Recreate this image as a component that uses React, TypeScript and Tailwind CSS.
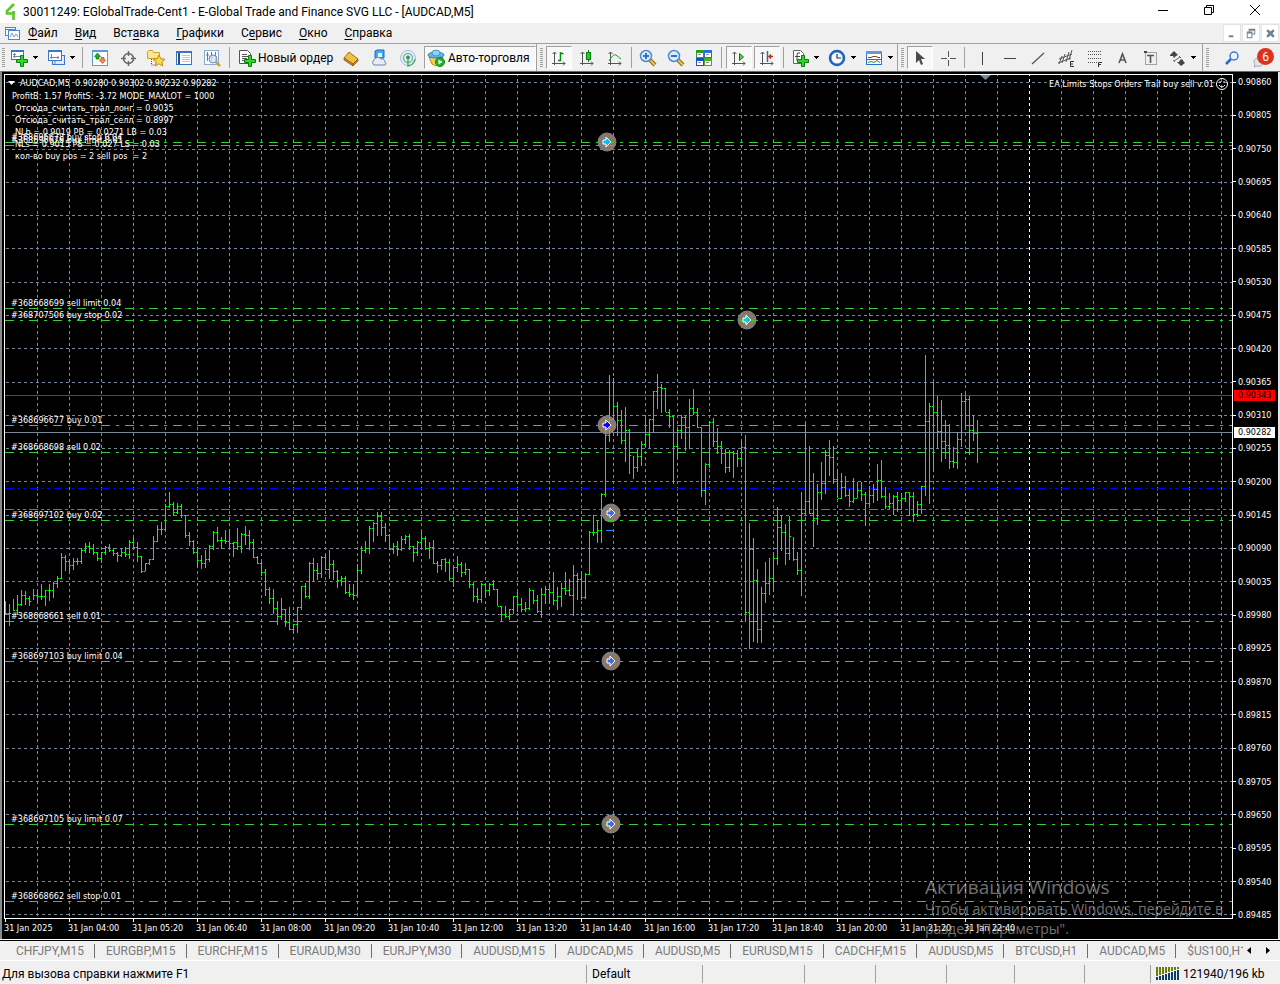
import React from 'react';

const PRICE_TOP = 82;
const PRICE_STEP = 33.28;
const BAR_STEP = 4;
const FIRST_BAR_X = 5;

const prices = Array.from({ length: 26 }, (_, i) => (0.9086 - i * 0.00055).toFixed(5));
const gridColumns = Array.from({ length: 38 }, (_, i) => 37 + i * 32);

const times = [
  '2025', '04:00', '05:20', '06:40', '08:00', '09:20', '10:40', '12:00',
  '13:20', '14:40', '16:00', '17:20', '18:40', '20:00', '21:20', '22:40',
];

// Each block holds high/low/close triples, in thirds of a pixel below its top
const barBlocks = [
  {
    top: 290,
    values: `933 975 970,942 1010 970,927 965 960,915 975 942,900 948 915,903 945 925,918 950 935,897 930 915,
      903 942 918,882 930 918,902 950 902,882 935 902,876 925 880,858 894 866,789 869 803,795 845 815,
      808 850 826,804 842 815,804 826 814,774 823 782,760 789 770,758 789 774,762 797 788,786 815 804,
      788 821 788,770 797 772,763 788 781,774 800 790,788 818 796,776 803 788,772 802 794,750 809 756,
      741 776 772,757 818 800,798 851 843,819 844 820,808 825 808,738 810 755,705 756 717,698 735 718,
      642 725 650,606 654 642,638 678 668,639 672 650,644 685 676,675 744 737,728 770 755,752 794 788,
      772 833 810,795 837 820,780 834 808,765 816 770,723 780 728,711 756 752,741 779 750,720 762 753,
      717 778 760,756 803 758,714 782 770,729 790 733,708 765 737,720 780 757,747 806 803,798 824 820,
      816 858 846,837 920 898,891 942 926,897 972 955,933 1005 980,924 990 957,958 1013 996,951 1020 1018,
      1003 1033 1003,952 1031 952,888 960 890,880 925 920,816 927 820,804 873 840,820 870 850`,
  },
  {
    top: 360,
    values: `588 654 592,584 632 628,570 657 612,600 660 633,630 684 660,648 678 656,648 704 698,674 711 702,
      672 722 707,612 707 631,558 644 570,543 581 566,500 584 506,486 546 490,458 530 468,456 530 503,
      491 546 526,524 570 567,551 582 560,543 590 568,528 573 537,525 552 530,524 570 560,558 606 577,
      543 588 546,518 564 535,530 570 564,548 597 562,540 614 611,603 641 616,597 630 598,594 638 608,
      597 664 656,621 681 621,588 638 612,606 651 636,609 645 628,628 684 672,668 726 710,684 731 717,
      669 731 674,672 716 690,671 708 674,660 692 687,687 740 738,738 784 762,738 776 770,747 780 747,
      708 762 710,696 758 733,714 758 748,726 758 746,684 752 692,690 734 720,705 759 755,684 774 702,
      678 732 687,675 732 697,636 735 720,681 750 710,669 741 684,636 705 692,657 710 706,615 768 645,
      639 720 658,636 720 712,639 717 642,513 645 517,465 528 518,480 551 511,399 549 402,174 411 225`,
  },
  {
    top: 340,
    values: `105 306 237,114 240 199,186 288 240,210 312 302,201 366 271,267 402 347,348 417 382,327 396 349,
      303 378 312,226 321 282,237 324 237,153 276 153,102 207 142,132 219 146,144 217 217,207 264 229,
      228 432 318,264 357 270,225 297 232,228 333 262,177 327 205,147 225 217,204 264 262,262 471 451,
      369 495 373,243 384 246,234 321 303,264 342 318,303 372 340,327 399 382,330 396 338,333 414 340,
      330 381 355,303 381 321,285 846 818,549 927 628,594 907 720,687 909 868,741 909 760,666 789 730,
      654 765 715,636 753 655,501 675 562,525 633 577,552 675 640,528 660 590,591 663 658,636 705 691,
      456 768 520,249 525 484,318 522 520,399 621 535,432 555 456,366 480 430,331 462 345,300 408 351,
      318 432 417,387 474 475,399 477 441,408 471 465,447 501 483,414 489 474,426 475 450,426 483 462,
      456 558 490,438 500 466,432 489 448,372 483 421,360 474 468,441 507 498,459 507 490,465 525 470,
      456 516 480,459 511 475,456 486 458,456 528 470,456 546 522,483 531 492,438 522 440,45 468 243,
      189 492 200,126 393 217,168 327 274,180 366 304,240 357 316,252 387 364,321 384 366,276 387 298,
      159 321 184,159 270 178,168 345 270,226 303 280,240 369 278`,
  },
];

const bars = barBlocks.flatMap(block =>
  block.values.split(',').map(row => {
    const [high, low, close] = row.trim().split(' ').map(v => block.top + Math.floor(Number(v) / 3));
    return { high, low, close };
  })
);

const barPath = bars
  .map((bar, i) => {
    const x = FIRST_BAR_X + i * BAR_STEP;
    const open = i > 0 ? bars[i - 1].close : bar.close;
    const left = open >= bar.high && open <= bar.low ? `M${x - 1} ${open}h1v1h-1z` : '';
    return `M${x} ${bar.high}h1V${bar.low}h-1z${left}M${x + 1} ${bar.close}h1v1h-1z`;
  })
  .join('');

const orders = [
  { y: 142, label: '#368696678 buy stop 0.04' },
  { y: 145, label: '#368696676 buy limit 0.01' },
  { y: 308, label: '#368668699 sell limit 0.04' },
  { y: 320, label: '#368707506 buy stop 0.02' },
  { y: 425, label: '#368696677 buy 0.01' },
  { y: 452, label: '#368668698 sell 0.02' },
  { y: 520, label: '#368697102 buy 0.02' },
  { y: 621, label: '#368668661 sell 0.01' },
  { y: 661, label: '#368697103 buy limit 0.04' },
  { y: 824, label: '#368697105 buy limit 0.07' },
  { y: 901, label: '#368668662 sell stop 0.01' },
];

const markers = [
  { x: 607, y: 142, color: '#00bfff' },
  { x: 747, y: 320, color: '#00ced1' },
  { x: 607, y: 425, color: '#0000ff' },
  { x: 611, y: 513, color: '#4169e1' },
  { x: 611, y: 661, color: '#4169e1' },
  { x: 611, y: 824, color: '#4169e1' },
];

const comments = [
  { text: 'ProfitB: 1.57 ProfitS: -3.72 MODE_MAXLOT = 1000', pad: 'pl-0' },
  { text: 'Отсюда_считать_трал_лонг = 0.9035', pad: 'pl-[3px]' },
  { text: 'Отсюда_считать_трал_селл = 0.8997', pad: 'pl-[3px]' },
  { text: 'NLb = 0.9019 PB = 0.0271 LB = 0.03', pad: 'pl-[3px]' },
  { text: 'NLs = 0.9015 PS = 0.027 LS = 0.03', pad: 'pl-[3px]' },
  { text: 'кол-во buy pos = 2 sell pos  = 2', pad: 'pl-[3px]' },
];

const menuItems = [
  ['', 'Ф', 'айл'],
  ['', 'В', 'ид'],
  ['Вст', 'а', 'вка'],
  ['', 'Г', 'рафики'],
  ['С', 'е', 'рвис'],
  ['', 'О', 'кно'],
  ['', 'С', 'правка'],
];

const chartTabs = [
  'CHFJPY,M15', 'EURGBP,M15', 'EURCHF,M15', 'EURAUD,M30', 'EURJPY,M30', 'AUDUSD,M15', 'AUDCAD,M5',
  'AUDUSD,M5', 'EURUSD,M15', 'CADCHF,M15', 'AUDUSD,M5', 'BTCUSD,H1', 'AUDCAD,M5', '$US100,H1',
];

interface ToolProps {
  label: string;
  children: React.ReactNode;
  drop?: boolean;
  pressed?: boolean;
}

const Glyph: React.FC<{ children: React.ReactNode }> = ({ children }) => (
  <svg width="20" height="20" viewBox="0 0 20 20" fill="none" className="shrink-0">
    {children}
  </svg>
);

const Tool: React.FC<ToolProps> = ({ label, children, drop, pressed }) => (
  <button
    type="button"
    aria-label={label}
    aria-pressed={pressed}
    className={`flex h-full shrink-0 items-center ${drop ? 'w-[37px]' : 'w-7'} ${pressed ? 'px-px' : ''}`}
  >
    <span
      className={`flex w-7 items-center justify-center ${
        pressed ? 'h-[23px] border border-t-[#a0a0a0] border-l-[#a0a0a0] border-r-white border-b-white bg-[#f8f8f8]' : ''
      }`}
    >
      <Glyph>{children}</Glyph>
    </span>
    {drop && <DropArrow />}
  </button>
);

const DropArrow = () => (
  <svg width="5" height="3" viewBox="0 0 5 3" className="shrink-0" shapeRendering="crispEdges">
    <path d="M0 0h5v1H4v1H3v1H2V2H1V1H0z" fill="#000" />
  </svg>
);

const Grip = () => (
  <span className="h-5 w-[3px] shrink-0 bg-[repeating-linear-gradient(#a0a0a0_0_1px,#f0f0f0_1px_2px)]" />
);

const Divider: React.FC<{ narrow?: boolean }> = ({ narrow }) => (
  <span className={`flex h-[21px] shrink-0 justify-center ${narrow ? 'w-[5px]' : 'w-[7px]'}`}>
    <span className="w-px bg-[#a0a0a0]" />
  </span>
);

const Plus = () => (
  <path d="M11.500 7.500h3v4h4v3h-4v4h-3v-4h-4v-3h4z" fill="#2bd92b" stroke="#0a7f0a" />
);

const Axes = () => (
  <path d="M5.500 4v13M3.500 6l2-2 2 2M3 15.500h13M14 13.500l2 2-2 2" stroke="#555" />
);

const Lens: React.FC<{ plus?: boolean }> = ({ plus }) => (
  <>
    <path d="M12 12l5 5" stroke="#8a6a10" strokeWidth="4" />
    <path d="M12 12l5 5" stroke="#f0c840" strokeWidth="2" />
    <circle cx="8" cy="8" r="5.500" fill="#d8ecfb" stroke="#4a8ad8" strokeWidth="1.500" />
    <path d={plus ? 'M5 8h6M8 5v6' : 'M5 8h6'} stroke="#3a70b8" strokeWidth="2" />
  </>
);

const TitleBar = () => (
  <header className="flex h-[23px] shrink-0 items-center bg-white pl-[5px] text-black">
    <svg width="11" height="18" viewBox="0 0 11 18" fill="none">
      <path d="M9 1L2 8v2.500h8M8.500 8v9" stroke="#5fc52e" strokeWidth="2.600" />
    </svg>
    <h1 className="ml-[7px] flex-1 truncate text-[12px] leading-4">
      30011249: EGlobalTrade-Cent1 - E-Global Trade and Finance SVG LLC - [AUDCAD,M5]
    </h1>
    <div className="flex h-full pr-0.5">
      {[
        { name: 'Свернуть', d: 'M6 10.500h10' },
        { name: 'Свернуть в окно', d: 'M6.500 7.500h7v7h-7zM8.500 7.500v-2h7v7h-2' },
        { name: 'Закрыть', d: 'M6 5l10 10M16 5L6 15' },
      ].map(b => (
        <button key={b.name} type="button" aria-label={b.name} className="flex w-[46px] items-start justify-center">
          <svg width="22" height="20" viewBox="0 0 22 20" fill="none" stroke="#000">
            <path d={b.d} />
          </svg>
        </button>
      ))}
    </div>
  </header>
);

const MenuBar = () => (
  <nav className="flex h-5 shrink-0 items-center bg-[#f0f0f0] pl-[5px] text-black">
    <svg width="15" height="15" viewBox="0 0 15 15" fill="none" stroke="#4a86d8">
      <rect x="0.500" y="1.500" width="10" height="8" fill="#fff" />
      <path d="M0.500 3.500h10" />
      <rect x="3.500" y="4.500" width="11" height="9" fill="#fff" />
      <path d="M5 11l2-4 2 4 2-3 2 3" strokeWidth="0.800" />
    </svg>
    <div className="ml-2 flex flex-1 gap-[17px] text-[12px] leading-4">
      {menuItems.map(([before, key, after]) => (
        <button key={key + after} type="button">
          {before}
          <u className="underline-offset-2">{key}</u>
          {after}
        </button>
      ))}
    </div>
    <div className="flex gap-px pr-px text-[#70808f]">
      {[
        { name: 'Свернуть график', d: 'M5 11h5v2H5z' },
        { name: 'Восстановить график', d: 'M6 4h7v6h-3v4H4V7h2zM7 6v1h3v2h2V6zM5 9v4h4V9z' },
        { name: 'Закрыть график', d: 'M5 5h2l2 2 2-2h2v2l-2 2 2 2v2h-2l-2-2-2 2H5v-2l2-2-2-2z' },
      ].map(b => (
        <button key={b.name} type="button" aria-label={b.name} className="size-[18px] border border-[#e3e3e3] bg-white">
          <svg width="16" height="16" viewBox="0 0 17 17" fill="currentColor" fillRule="evenodd">
            <path d={b.d} />
          </svg>
        </button>
      ))}
    </div>
  </nav>
);

const Toolbar = () => (
  <div
    role="toolbar"
    aria-label="Панель инструментов"
    className="flex h-7 shrink-0 items-center overflow-hidden border-t border-[#a0a0a0] bg-[#f0f0f0] pl-0.5 text-[12px] text-black"
  >
    <Grip />
    <Tool label="Новый график" drop>
      <rect x="2.500" y="2.500" width="12" height="9" fill="#fff" stroke="#3b77c9" />
      <path d="M2 3h13" stroke="#3b77c9" strokeWidth="2" />
      <path d="M5.500 5v5M4 8.500h7M4 6.500h3" stroke="#6a87af" />
      <Plus />
    </Tool>
    <Tool label="Профили" drop>
      <rect x="6.500" y="7.500" width="12" height="9" fill="#dcebfb" stroke="#3b77c9" />
      <rect x="2.500" y="2.500" width="13" height="10" fill="#fff" stroke="#3b77c9" />
      <path d="M2 3h14" stroke="#3b77c9" strokeWidth="2" />
      <path d="M5.500 6v5M4 9.500h9M12 8v3M9 16v-3" stroke="#6a87af" />
    </Tool>
    <Divider />
    <Tool label="Обзор рынка">
      <rect x="2.500" y="2.500" width="15" height="15" fill="#fff" stroke="#5c9ade" />
      <path d="M2 3h16" stroke="#5c9ade" strokeWidth="2" />
      <path d="M7.500 5l3 3.500h-1.500V11H6V8.500H4.500z" fill="#20b020" stroke="#0a730a" strokeWidth="0.700" />
      <path d="M12.500 15.500l3-3.500h-1.500V9.500h-3V12H9.500z" fill="#ff8a50" stroke="#c33a08" strokeWidth="0.700" />
    </Tool>
    <Tool label="Окно данных">
      <circle cx="10.500" cy="10.500" r="5" stroke="#666" strokeWidth="1.500" />
      <path d="M10.500 3v5M10.500 13v5M3 10.500h5M13 10.500h5" stroke="#666" strokeWidth="1.500" />
    </Tool>
    <Tool label="Навигатор">
      <path d="M1.500 3.500l1-1h4l1 2h6v6h-12z" fill="#fbe58a" stroke="#c7a33a" />
      <path d="M5.500 11v6h4" stroke="#555" strokeDasharray="1 1" />
      <path d="M13 7l1.800 3.800 4.200.4-3.200 2.700 1 4.100-3.800-2.200L9.200 18l1-4.100L7 11.200l4.200-.4z" fill="#ffd84a" stroke="#c08a12" />
    </Tool>
    <Tool label="Терминал">
      <rect x="2.500" y="3.500" width="15" height="13" fill="#fff" stroke="#3a75c0" />
      <path d="M2 4h16" stroke="#3a75c0" strokeWidth="2" />
      <path d="M5 5v11" stroke="#2a4f88" strokeWidth="2" />
      <path d="M8 7.500h8M8 9.500h8M8 11.500h8M8 13.500h8" stroke="#b8c8dd" />
    </Tool>
    <Tool label="Тестер стратегий">
      <rect x="2.500" y="2.500" width="14" height="14" fill="#f7fbff" stroke="#8aaad0" />
      <path d="M5.500 4v9M9.500 4v9M13.500 4v9M4 7h3M8 9h3" stroke="#777" />
      <path d="M14 14l4 4" stroke="#d9a520" strokeWidth="2.500" />
      <circle cx="11" cy="11" r="4" fill="#cfe5f8cc" stroke="#5f8fbf" />
    </Tool>
    <Divider />
    <button type="button" className="flex h-full w-[104px] shrink-0 items-center gap-px pl-1">
      <Glyph>
        <path d="M2.500 2.500h8l3 3v10h-11z" fill="#fff" stroke="#555" />
        <path d="M5 6.500h5M5 8.500h6M5 10.500h5M5 12.500h3" stroke="#555" />
        <Plus />
      </Glyph>
      <span className="whitespace-nowrap">Новый ордер</span>
    </button>
    <Tool label="MetaEditor">
      <path d="M3 10l5-6 9 7-5 5z" fill="#f0bf48" stroke="#a3700d" />
      <path d="M3 10v2l9 6v-2zM12 16v2l5-5v-2z" fill="#c98d1c" stroke="#8a5b06" strokeWidth="0.700" />
    </Tool>
    <Tool label="MQL5.community">
      <path d="M6 3l2-1h7v8H6z" fill="#3fa9f5" stroke="#1272c4" />
      <path d="M9 5h4v4H9z" fill="#e8f6ff" />
      <path d="M5 17a3 3 0 010-5 4 4 0 017-1 3 3 0 014 3 2 2 0 010 3z" fill="#e3ecf7" stroke="#6b86b0" />
    </Tool>
    <Tool label="Сигналы">
      <circle cx="11" cy="10" r="7.500" fill="#e6f1f6" stroke="#9fbfd4" />
      <circle cx="11" cy="10" r="4.500" stroke="#7fb0b8" strokeWidth="1.500" />
      <circle cx="11" cy="9.500" r="2" fill="#2f9a3f" />
      <path d="M11 10v8q6-1 7-7" stroke="#4fae5c" strokeWidth="1.500" />
    </Tool>
    <button
      type="button"
      aria-pressed
      className="ml-[3px] flex h-[23px] w-28 shrink-0 items-center gap-0.5 border border-t-[#a0a0a0] border-l-[#a0a0a0] border-r-white border-b-white bg-[#f8f8f8] pl-px"
    >
      <Glyph>
        <path d="M3 9h14l-3 7-4 2-4-2z" fill="#f5cf52" stroke="#b98b14" />
        <ellipse cx="10" cy="7" rx="8" ry="3" fill="#5fb4ea" stroke="#2f7fb8" />
        <ellipse cx="10" cy="5" rx="4" ry="3" fill="#8fd0f5" stroke="#4a95c8" />
        <circle cx="14" cy="14" r="4.500" fill="#22b322" stroke="#0b8a0b" />
        <path d="M12.500 11.500v5l4-2.500z" fill="#fff" />
      </Glyph>
      <span className="whitespace-nowrap">Авто-торговля</span>
    </button>
    <span className="mr-[3px] h-full w-px shrink-0 bg-[#a0a0a0]" />
    <Grip />
    <span className="w-0.5 shrink-0" />
    <Tool label="Бары" pressed>
      <Axes />
      <path d="M11.500 4v9M11.500 5.500h3M9 12.500h3" stroke="#0a8a0a" strokeWidth="1.500" />
    </Tool>
    <Tool label="Японские свечи">
      <Axes />
      <path d="M11.500 2v12" stroke="#0a7a0a" />
      <rect x="9.500" y="4.500" width="4" height="7" fill="#22cc22" stroke="#0a7a0a" />
    </Tool>
    <Tool label="Линия">
      <Axes />
      <path d="M4 13c3-5 5-7 7-6s3 3 5 4" stroke="#1c9a1c" />
    </Tool>
    <Divider narrow />
    <Tool label="Увеличить"><Lens plus /></Tool>
    <Tool label="Уменьшить"><Lens /></Tool>
    <Tool label="Расположить окна">
      <path d="M2 2h8v8H2z" fill="#2f9e1d" />
      <path d="M10 2h8v8h-8z" fill="#2b6cd4" />
      <path d="M2 10h8v8H2z" fill="#1f4fbe" />
      <path d="M10 10h8v8h-8z" fill="#48ae22" />
      <path d="M3 5h6v4H3zM11 5h6v4h-6zM3 13h6v4H3zM11 13h6v4h-6z" fill="#fff" />
      <path d="M4 6.500h3M12 6.500h3M4 14.500h3M12 14.500h3" stroke="#88a" />
    </Tool>
    <Divider />
    <Tool label="Автопрокрутка" pressed>
      <Axes />
      <path d="M10.500 5.500v7l4-3.500z" fill="#5fd05f" stroke="#0a7a0a" />
    </Tool>
    <Tool label="Сдвиг графика" pressed>
      <Axes />
      <path d="M10.500 3v11" stroke="#1e6fc0" strokeWidth="1.500" />
      <path d="M16 8.500h-4M14 6.500l-2 2 2 2" stroke="#c2310e" strokeWidth="1.500" />
    </Tool>
    <Divider narrow />
    <Tool label="Индикаторы" drop>
      <path d="M3.500 2.500h7l3 3v10h-10z" fill="#fff" stroke="#666" />
      <path d="M10 5q-3-1-3 2v6M5 8.500h5" stroke="#444" />
      <Plus />
    </Tool>
    <Tool label="Периоды" drop>
      <circle cx="10" cy="10" r="7" fill="#f3f9ff" stroke="#1c62c4" strokeWidth="2.500" />
      <path d="M10 6v4h4" stroke="#333" strokeWidth="1.200" />
      <path d="M10 4v1M10 15v1M4 10h1M15 10h1" stroke="#789" />
    </Tool>
    <Tool label="Шаблоны" drop>
      <rect x="2.500" y="3.500" width="15" height="13" fill="#fff" stroke="#2a6fc9" />
      <path d="M2 4.500h16" stroke="#5c9ade" strokeWidth="3" />
      <path d="M4 9.500h3l2-1h3l2 1h2" stroke="#a03018" />
      <path d="M2 11.500h16" stroke="#2a6fc9" />
      <path d="M4 14.500l3-1 3 1 3-2 3 2" stroke="#1c9a3c" />
    </Tool>
    <span className="mr-[3px] h-full w-px shrink-0 bg-[#a0a0a0]" />
    <Grip />
    <span className="w-0.5 shrink-0" />
    <Tool label="Курсор" pressed>
      <path d="M6 3v12l3-3 2 5 2-1-2-5h4z" fill="#4a4a4a" />
    </Tool>
    <Tool label="Перекрестие">
      <path d="M10.500 3v6M10.500 12v6M3 10.500h6M12 10.500h6" stroke="#555" />
    </Tool>
    <Divider narrow />
    <Tool label="Вертикальная линия"><path d="M11.500 4v13" stroke="#444" /></Tool>
    <Tool label="Горизонтальная линия"><path d="M5 10.500h12" stroke="#444" /></Tool>
    <Tool label="Трендовая линия"><path d="M5 16L17 5" stroke="#555" strokeWidth="1.300" /></Tool>
    <Tool label="Равноудаленный канал">
      <path d="M4 11l13-5M3 15l13-5M7 8l-3 8M10 6L7 15M14 4l-3 10M17 2l-3 10" stroke="#555" />
      <path d="M19 13.500h-3.500v5H19M15.500 16H18" stroke="#333" />
    </Tool>
    <Tool label="Линии Фибоначчи">
      <path d="M5 3.500h13M5 6.500h13M5 10.500h13M5 14.500h9" stroke="#555" strokeDasharray="1 1" />
      <path d="M19 14.500h-3.500V19M15.500 16.500H18" stroke="#333" />
    </Tool>
    <Tool label="Текст">
      <path d="M8 15l3.500-9 3.500 9M9 12h5" stroke="#555" strokeWidth="1.600" />
    </Tool>
    <Tool label="Текстовая метка">
      <path d="M6.500 4.500h11v12h-11z" stroke="#555" strokeDasharray="1 1" />
      <path d="M8 7.500h7M11.500 7v8" stroke="#555" strokeWidth="1.600" />
      <path d="M5 3h3v2H5z" fill="#444" />
    </Tool>
    <Tool label="Стрелки" drop>
      <path d="M7 3l4 4-2 1-2 2-1-2H3V7z" fill="#444" />
      <path d="M15 11l2 3 1 1-4 3-4-4h2l1-2z" fill="#444" />
      <path d="M6 12l2 2M12 8l2 2M7 13l6-4" stroke="#666" />
    </Tool>
    <span className="mr-[3px] ml-0.5 h-full w-px shrink-0 bg-[#a0a0a0]" />
    <Grip />
    <span className="w-2 shrink-0" />
    <Tool label="Поиск">
      <path d="M5 16l5-5" stroke="#2f63d0" strokeWidth="2.500" />
      <circle cx="13" cy="8" r="4" fill="#eef5ff" stroke="#3f78dc" strokeWidth="1.500" />
    </Tool>
    <button type="button" aria-label="Уведомления" className="relative h-full w-7 shrink-0">
      <svg width="20" height="20" viewBox="0 0 20 20" className="mt-1 ml-1">
        <path d="M5 17l1-3a5 4 0 118 0 5 4 0 01-6 2z" fill="#dfe3ea" stroke="#aab" />
      </svg>
      <span className="absolute top-1 -right-px flex size-[17px] items-center justify-center rounded-full bg-[#dc3220] text-[12px] leading-4 text-white">
        6
      </span>
    </button>
  </div>
);

const Marker: React.FC<{ x: number; y: number; color: string }> = ({ x, y, color }) => (
  <g transform={`translate(${x} ${y})`}>
    <circle r="9" fill="none" stroke="#778899" />
    <path d="M-4 -2h3v-3l5 5-5 5v-3h-3z" fill={color} stroke="#fff" />
  </g>
);

const Plot = () => (
  <div className="relative min-w-0 flex-1 overflow-hidden border border-white">
    <svg className="block h-full w-full" fill="none">
      {/* window coordinates, the plot starts at 5,75 */}
      <g transform="translate(-5 -75)">
        <g stroke="#778899" strokeDasharray="3 3" shapeRendering="crispEdges">
          {prices.map((p, i) => {
            const y = Math.round(PRICE_TOP + i * PRICE_STEP) + 0.5;
            return <path key={p} d={`M6 ${y}H4000`} />;
          })}
          {gridColumns.map(x => (
            <path key={x} d={`M${x + 0.5} 73V2000`} stroke={x === 1029 ? '#fff' : undefined} />
          ))}
        </g>
        <g shapeRendering="crispEdges">
          <path d="M5 395.500H4000" stroke="#e01010" />
          <path d="M5 432.500H4000" stroke="#778899" />
          <path d="M5 488.500H4000" stroke="#0000ff" strokeDasharray="9 3 3 3 3 3" />
          <path d="M5 509.500H4000" stroke="#ff4500" strokeDasharray="9 3 3 3 3 3" />
        </g>
        {markers.map(m => (
          <circle key={`${m.x}-${m.y}`} cx={m.x} cy={m.y} r="9" fill="#8b7765" />
        ))}
        <g stroke="#32cd32" strokeDasharray="9 6 3 6" shapeRendering="crispEdges">
          {orders.map(o => (
            <path key={o.y} d={`M5 ${o.y + 0.5}H4000`} />
          ))}
        </g>
        <path d={barPath} fill="#00ff00" shapeRendering="crispEdges" />
        {markers.map(m => (
          <Marker key={`${m.x}-${m.y}`} {...m} />
        ))}
        <path d="M606 530.500h8" stroke="#1e90ff" shapeRendering="crispEdges" />
        <path d="M980 75h11l-5.500 5z" fill="#778899" />
        <g fill="#fff" className="text-[9px]">
          {orders.map(o => (
            <text key={o.label} x="11" y={o.y - 2}>{o.label}</text>
          ))}
        </g>
      </g>
    </svg>

    <div className="absolute top-0.5 left-[3px] text-[9px] leading-3 whitespace-pre text-white">
      <div className="flex items-center gap-[5px]">
        <svg width="7" height="4" viewBox="0 0 7 4"><path d="M0 0h7L3.500 4z" fill="#fff" /></svg>
        <span>AUDCAD,M5  0.90280 0.90302 0.90232 0.90282</span>
      </div>
      <div className="mt-px pl-1">
        {comments.map(c => (
          <p key={c.text} className={c.pad}>{c.text}</p>
        ))}
      </div>
    </div>

    <div className="absolute top-[3px] right-1 flex items-center gap-0.5 text-[9px] leading-3 text-white">
      <span>EA Limits Stops Orders Trail buy sell v.01</span>
      <svg width="12" height="12" viewBox="0 0 12 12" fill="none" stroke="#fff">
        <circle cx="6" cy="6" r="5.500" />
        <path d="M3 7q3 4 6 0M4 3v2M8 3v2" />
      </svg>
    </div>
  </div>
);

const ChartWindow = () => (
  <main className="relative flex min-h-0 flex-1 border-t border-l-2 border-t-[#696969] border-l-[#8a8a8a] bg-black font-['DejaVu_Sans_Condensed','DejaVu_Sans',sans-serif] text-white">
    <div className="flex min-w-0 flex-1 flex-col pt-0.5 pl-0.5">
      <Plot />
      <ol className="flex h-5 shrink-0 overflow-hidden">
        {times.map(t => (
          <li key={t} className="w-16 shrink-0 text-[9px] leading-3 whitespace-nowrap">
            <span className="ml-px block h-[3px] w-px bg-white" />
            31 Jan {t}
          </li>
        ))}
      </ol>
    </div>
    <div className="relative w-[45px] shrink-0">
      <ol className="flex h-full flex-col justify-between pt-1 pb-[18px]">
        {prices.map(p => (
          <li key={p} className="flex items-center gap-0.5 text-[9px] leading-3">
            <span className="h-px w-[3px] bg-white" />
            {p}
          </li>
        ))}
      </ol>
      <span className="absolute top-[318px] right-[3px] left-px bg-[#ff0000] pl-1 text-[9px] leading-[11px] text-black">0.90343</span>
      <span className="absolute top-[355px] right-[3px] left-px bg-white pl-1 text-[9px] leading-[11px] text-black">0.90282</span>
    </div>
    <div className="w-0.5 shrink-0 bg-[#e3e3e3]" />

    <div className="pointer-events-none absolute right-[51px] bottom-0 w-[304px] font-['Open_Sans','Noto_Sans',sans-serif] whitespace-nowrap text-white/45">
      <p className="text-[19px] leading-6">Активация Windows</p>
      <p className="text-[14px] leading-5">Чтобы активировать Windows, перейдите в</p>
      <p className="text-[14px] leading-5">раздел "Параметры".</p>
    </div>
  </main>
);

const ChartTabs = () => (
  <div className="flex h-[22px] shrink-0 flex-col bg-[#f0f0f0]">
    <div className="h-0.5 shrink-0 border-b border-black bg-white" />
    <div className="flex min-h-0 flex-1 items-center border-b border-white">
      <div role="tablist" className="flex min-w-0 flex-1 overflow-hidden pl-[5px] text-[12px] leading-4 text-[#7a7a7a]">
        {chartTabs.map((t, i) => (
          <button key={i} type="button" role="tab" className="flex shrink-0 items-center">
            {i > 0 && <span className="h-3.5 w-px bg-[#6d6d6d]" />}
            <span className="pr-2.5 pl-[11px]">{t}</span>
          </button>
        ))}
      </div>
      <div className="flex w-[37px] items-center justify-between pr-2.5 pl-1">
        <button type="button" aria-label="Назад">
          <svg width="4" height="7" viewBox="0 0 4 7"><path d="M4 0v7L0 3.500z" /></svg>
        </button>
        <button type="button" aria-label="Вперед">
          <svg width="4" height="7" viewBox="0 0 4 7"><path d="M0 0v7l4-3.500z" /></svg>
        </button>
      </div>
    </div>
  </div>
);

const StatusBar = () => (
  <footer className="flex h-[23px] shrink-0 items-center bg-[#f0f0f0] pt-0.5 text-[12px] leading-4 text-black">
    <span className="min-w-0 flex-1 truncate pl-0.5">Для вызова справки нажмите F1</span>
    <span className="flex h-[18px] w-[116px] items-center border-l border-[#a0a0a0] pl-[5px]">Default</span>
    <span className="h-[18px] w-[102px] border-l border-[#a0a0a0]" />
    <span className="h-[18px] w-[71px] border-l border-[#a0a0a0]" />
    <span className="h-[18px] w-[71px] border-l border-[#a0a0a0]" />
    <span className="h-[18px] w-[68px] border-l border-[#a0a0a0]" />
    <span className="h-[18px] w-[70px] border-l border-[#a0a0a0]" />
    <span className="h-[18px] w-[66px] border-l border-[#a0a0a0]" />
    <span className="flex h-[18px] w-[130px] items-center gap-1 border-l border-[#a0a0a0] pl-[5px] whitespace-nowrap">
      <svg width="23" height="13" viewBox="0 0 23 13" shapeRendering="crispEdges">
        {[0, 1, 2, 3, 4, 5, 6, 7].map(i => (
          <g key={i}>
            <rect x={i * 3} y="0" width="2" height={9 - i} fill="#6b7f00" />
            <rect x={i * 3} y={10 - i} width="2" height={3 + i} fill="#0b3f66" />
          </g>
        ))}
      </svg>
      121940/196 kb
    </span>
  </footer>
);

export default function App() {
  return (
    <div className="flex h-screen flex-col overflow-hidden bg-[#f0f0f0] font-['Roboto','Open_Sans',sans-serif]">
      <TitleBar />
      <MenuBar />
      <Toolbar />
      <ChartWindow />
      <ChartTabs />
      <StatusBar />
    </div>
  );
}
